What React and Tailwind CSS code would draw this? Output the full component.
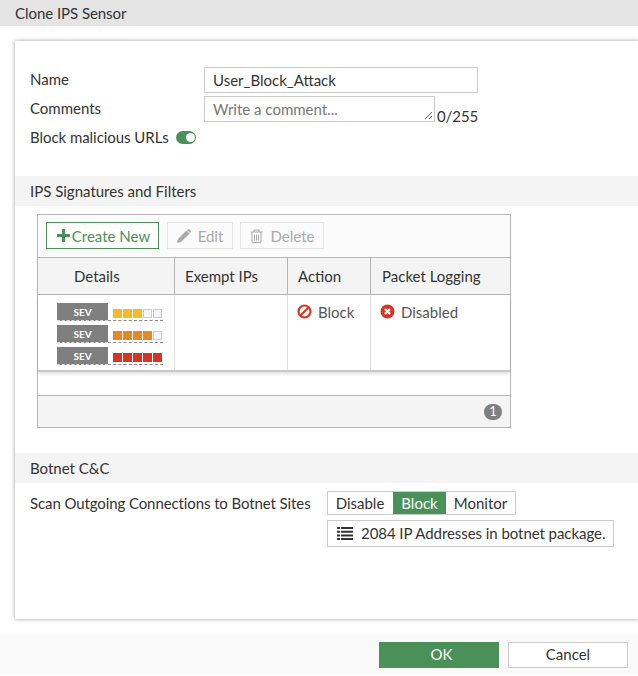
import React from 'react';

const sevRows = [
  { on: 3, color: 'bg-[#f6b92b]' },
  { on: 4, color: 'bg-[#e58a22]' },
  { on: 5, color: 'bg-[#d63526]' },
];

const SevRow = ({ on, color }) => (
  <div className="flex items-end h-[18px]">
    <div className="w-[51px] h-[18px] bg-[#7f7f7f] border-b border-dashed border-[#ddd] text-white text-[10px] font-bold flex items-center justify-center pt-px">SEV</div>
    <div className="w-[55px] h-[18px] border-b border-dashed border-[#888] flex items-end gap-px pl-[5px] pb-[2px]">
      {[0, 1, 2, 3, 4].map((i) => (
        <span key={i} className={i < on ? `w-[9px] h-[9px] ${color}` : 'w-[9px] h-[9px] bg-[#f6f6f6] border border-[#ccc]'}></span>
      ))}
    </div>
  </div>
);

const App = () => {
  return (
    <div className="w-[638px] h-[676px] bg-white overflow-hidden flex flex-col text-[15px] text-[#333] font-['Lato','Open_Sans',sans-serif]">
      <div className="h-[26px] bg-[#e4e4e4] pl-[15px] leading-[27px] tracking-[-0.05px] shrink-0">Clone IPS Sensor</div>

      <div className="mt-[15px] ml-[15px] h-[578px] shrink-0 bg-white shadow-[0_0_4px_rgba(0,0,0,0.4)] pt-[26px]">
        <div className="pl-[15px] flex flex-col">
          <div className="flex h-[26px]">
            <label className="w-[174px] leading-[24px]">Name</label>
            <input readOnly value="User_Block_Attack" className="w-[274px] h-[26px] border border-[#ccc] px-2 text-[15px] text-[#333] outline-none" />
          </div>
          <div className="flex mt-[3px] h-[26px]">
            <label className="w-[174px] leading-[24px]">Comments</label>
            <div className="relative w-[231px] h-[26px] border border-[#ccc] px-2 leading-[25px] text-[#777]">
              Write a comment...
              <svg className="absolute right-px bottom-px" width="9" height="9" viewBox="0 0 9 9">
                <path d="M1 8 8 1M5 8 8 5" stroke="#666" strokeWidth="1" fill="none" />
              </svg>
            </div>
            <span className="ml-[2px] leading-[20px] mt-[10px] tracking-[-0.1px]">0/255</span>
          </div>
          <div className="flex items-center mt-[3px] h-[24px]">
            <span className="tracking-[-0.05px]">Block malicious URLs</span>
            <span className="ml-[7px] w-[20px] h-[13px] rounded-full bg-[#4a9159] relative">
              <span className="absolute right-[1px] top-[2px] w-[9px] h-[9px] rounded-full bg-white"></span>
            </span>
          </div>
        </div>

        <div className="mt-[27px] h-[30px] bg-[#f4f4f4] pl-[15px] leading-[31px]">IPS Signatures and Filters</div>

        <div className="mt-[8px] ml-[22px] w-[474px] h-[214px] border border-[#b5b5b5] flex flex-col">
          <div className="h-[43px] bg-[#fbfbfb] border-b border-[#b5b5b5] flex items-start pt-[7px] pl-[8px] shrink-0">
            <button className="w-[113px] h-[27px] border border-[#4a9159] bg-white text-[#4a9159] flex items-center justify-center pt-px pl-[2px]">
              <svg className="mr-[2px] -mt-[2px]" width="13" height="13" viewBox="0 0 13 13" fill="#4a9159">
                <path d="M5 0h3v5h5v3H8v5H5V8H0V5h5z" />
              </svg>
              Create New
            </button>
            <button className="ml-[8px] w-[66px] h-[27px] border border-[#e4e4e4] text-[#aaa] flex items-center justify-center gap-[7px] pt-px">
              <svg className="-mt-px" width="14" height="14" viewBox="0 0 14 14" fill="#aaa">
                <path d="M0 14 1 10 9.5 1.5 12.5 4.5 4 13zM10.5.5q1-1 2 0l1 1q1 1 0 2l-.5.5-3-3z" />
              </svg>
              Edit
            </button>
            <button className="ml-[7px] w-[84px] h-[27px] border border-[#e4e4e4] text-[#aaa] flex items-center justify-center gap-[8px] pt-px">
              <svg className="-mt-px" width="13" height="14" viewBox="0 0 13 14" fill="none" stroke="#aaa" strokeWidth="1">
                <path d="M.5 3h12M4 3V1h5v2M2 3v9.5q0 1 1 1h7q1 0 1-1V3M4.5 5.5v6M6.5 5.5v6M8.5 5.5v6" />
              </svg>
              Delete
            </button>
          </div>

          <div className="h-[37px] bg-[#f4f4f4] border-b border-[#b5b5b5] flex leading-[37px] shrink-0">
            <div className="w-[137px] border-r border-[#b5b5b5] pl-[36px]">Details</div>
            <div className="w-[113px] border-r border-[#b5b5b5] pl-[10px]">Exempt IPs</div>
            <div className="w-[83px] border-r border-[#b5b5b5] pl-[10px]">Action</div>
            <div className="flex-1 pl-[11px]">Packet Logging</div>
          </div>

          <div className="relative h-[77px] bg-white border-b-2 border-[#c9c9c9] shadow-[0_2px_3px_rgba(0,0,0,0.12)] flex shrink-0 text-[#555]">
            <div className="w-[137px] border-r border-[#e0e0e0] pl-[19px] pt-[8px] flex flex-col gap-[4px]">
              {sevRows.map((row, i) => <SevRow key={i} {...row} />)}
            </div>
            <div className="w-[113px] border-r border-[#e0e0e0]"></div>
            <div className="w-[83px] border-r border-[#e0e0e0] pl-[9px] pt-[7px] flex items-start gap-[6px] leading-[20px]">
              <svg className="mt-[2px]" width="15" height="15" viewBox="0 0 15 15" fill="none" stroke="#d63526" strokeWidth="2.2">
                <circle cx="7.5" cy="7.5" r="6" />
                <path d="M3.5 11.5 11.5 3.5" />
              </svg>
              Block
            </div>
            <div className="flex-1 pl-[9px] pt-[7px] flex items-start gap-[6px] leading-[20px]">
              <svg className="mt-[2px]" width="15" height="15" viewBox="0 0 15 15">
                <circle cx="7.5" cy="7.5" r="7" fill="#d63526" />
                <path d="M5 5 10 10M10 5 5 10" stroke="#fff" strokeWidth="2.4" />
              </svg>
              Disabled
            </div>
          </div>

          <div className="h-[24px] bg-white border-b border-[#b5b5b5] shrink-0"></div>

          <div className="flex-1 bg-[#f4f4f4] flex items-center justify-end pr-[8px] pt-[1px]">
            <span className="w-[18px] h-[16px] rounded-full bg-[#7f7f7f] text-white text-[13px] flex items-center justify-center">1</span>
          </div>
        </div>

        <div className="mt-[25px] h-[30px] bg-[#f4f4f4] pl-[15px] leading-[31px]">Botnet C&amp;C</div>

        <div className="flex mt-[8px] pl-[15px]">
          <div className="w-[297px] leading-[25px] tracking-[-0.1px]">Scan Outgoing Connections to Botnet Sites</div>
          <div className="flex flex-col items-start">
            <div className="flex h-[24px] border border-[#ccc] leading-[22px]">
              <span className="w-[65px] text-center pr-px">Disable</span>
              <span className="w-[53px] text-center bg-[#4a9159] text-white">Block</span>
              <span className="w-[69px] text-center">Monitor</span>
            </div>
            <div className="mt-[5px] w-[287px] h-[27px] border border-[#ccc] flex items-center pl-[9px] gap-[8px] tracking-[-0.06px]">
              <svg width="16" height="13" viewBox="0 0 16 13" fill="#333">
                <path d="M0 0h3v2H0zM4 0h12v2H4zM0 3.7h3v2H0zM4 3.7h12v2H4zM0 7.4h3v2H0zM4 7.4h12v2H4zM0 11h3v2H0zM4 11h12v2H4z" />
              </svg>
              2084 IP Addresses in botnet package.
            </div>
          </div>
        </div>
      </div>

      <div className="mt-[15px] h-[41px] bg-[#f9f9f9] flex items-center justify-end pr-[10px] gap-[9px] shrink-0">
        <button className="w-[120px] h-[26px] bg-[#4a9159] text-white pl-[5px]">OK</button>
        <button className="w-[120px] h-[26px] bg-white border border-[#ccc] text-[#333]">Cancel</button>
      </div>
    </div>
  );
};

export default App;
